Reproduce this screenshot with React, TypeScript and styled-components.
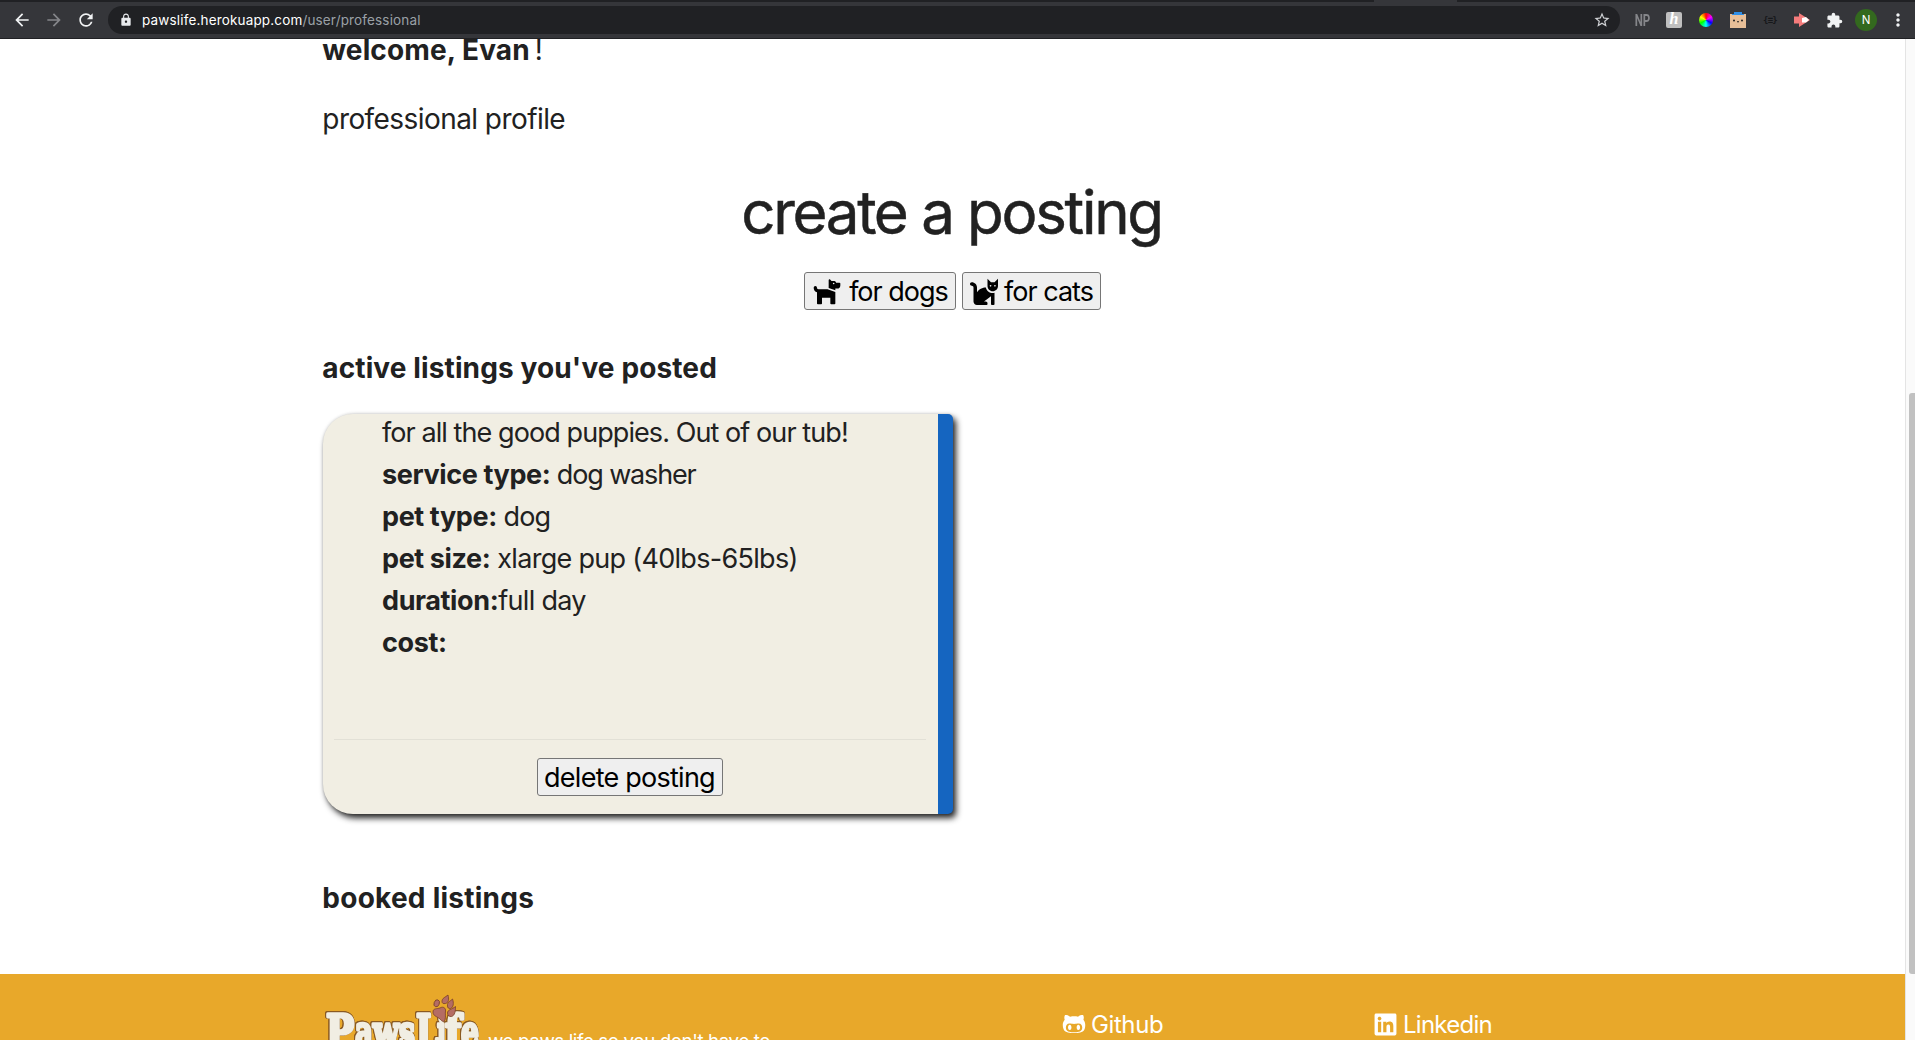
import React from "react";
import styled, { createGlobalStyle } from "styled-components";
import { FaDog, FaCat, FaGithubAlt, FaLinkedin } from "react-icons/fa";
import { MdArrowBack, MdArrowForward, MdRefresh, MdLock, MdStarBorder, MdExtension, MdMoreVert } from "react-icons/md";

const Global = createGlobalStyle`
  * { box-sizing: border-box; }
  html, body { margin: 0; padding: 0; overflow: hidden; background: #fff; }
  body { font-family: Inter, "Liberation Sans", sans-serif; color: #212121; }
`;

const Screen = styled.div`
  width: 1915px;
  height: 1040px;
  display: flex;
  flex-direction: column;
  overflow: hidden;
`;

const TabStrip = styled.div`
  height: 2px;
  flex: none;
  background: #202124;
  display: flex;
`;

const ActiveTab = styled.div`
  margin-left: 1374px;
  width: 83px;
  background: #35363a;
`;

const Toolbar = styled.header`
  height: 37px;
  flex: none;
  display: flex;
  align-items: center;
  background: #35363a;
  border-bottom: 1px solid #202124;
  padding-left: 12px;
`;

const NavIcon = styled.span<{ $dim?: boolean }>`
  width: 32px;
  display: flex;
  color: ${(p) => (p.$dim ? "#85868a" : "#f1f3f4")};
  svg { width: 20px; height: 20px; }
`;

const AddressBar = styled.div`
  width: 1512px;
  height: 28px;
  border-radius: 14px;
  background: #202124;
  display: flex;
  align-items: center;
  padding: 0 9px 0 11px;
  font-size: 13.5px;
`;

const Lock = styled(MdLock)`
  width: 14px;
  height: 14px;
  color: #e8eaed;
  margin-right: 9px;
`;

const Host = styled.span`
  color: #fff;
  letter-spacing: 0.16px;
`;

const Path = styled.span`
  color: #9aa0a6;
  flex: 1;
  letter-spacing: 0.15px;
`;

const Star = styled(MdStarBorder)`
  width: 18px;
  height: 18px;
  color: #d0d2d5;
`;

const Extensions = styled.div`
  display: flex;
  align-items: center;
  margin-left: 6px;
`;

const Slot = styled.span`
  width: 32px;
  height: 24px;
  display: flex;
  align-items: center;
  justify-content: center;
  color: #f1f3f4;
`;

const NpMark = styled.span`
  font: 700 17px Roboto, sans-serif;
  color: #85868a;
  transform: scaleX(0.68);
`;

const HoneyMark = styled.span`
  width: 16px;
  height: 16px;
  border-radius: 2px;
  background: #bfbfbf;
  color: #fff;
  font: italic 700 16px/14px "Liberation Serif", serif;
  text-align: center;
`;

const Wheel = styled.span`
  width: 14px;
  height: 14px;
  border-radius: 50%;
  background: conic-gradient(#f00, #f0f, #00f, #0ff, #0f0, #ff0, #f00);
`;

const Braces = styled.span`
  font: 700 9px "DejaVu Sans Mono", monospace;
  letter-spacing: -0.8px;
  color: #17181a;
`;

const Avatar = styled.span`
  width: 22px;
  height: 22px;
  border-radius: 50%;
  background: #33691e;
  color: #fff;
  font-size: 11.5px;
  line-height: 22px;
  text-align: center;
`;

const Viewport = styled.div`
  flex: 1;
  min-height: 0;
  display: flex;
`;

const Page = styled.div`
  width: 1905px;
  display: flex;
  flex-direction: column;
  overflow: hidden;
`;

const Main = styled.main`
  height: 935px;
  flex: none;
  padding: 0 323px;
  display: flex;
  flex-direction: column;
`;

const Line = styled.p<{ $h: number; $bold?: boolean; $ls: number }>`
  margin: 0 0 0 -0.7px;
  flex: none;
  height: ${(p) => p.$h}px;
  line-height: 42px;
  font-size: 28px;
  font-weight: ${(p) => (p.$bold ? 700 : 400)};
  letter-spacing: ${(p) => p.$ls}px;
  white-space: pre;
`;

const Welcome = styled(Line)`
  margin-top: -10px;
`;

const Plain = styled.span`
  font-weight: 400;
  margin-left: -3px;
`;

const Booked = styled(Line)`
  margin-top: 63px;
`;

const Title = styled.h2`
  margin: 0;
  height: 95px;
  line-height: 70px;
  flex: none;
  text-align: center;
  font-size: 60px;
  font-weight: 400;
  letter-spacing: -2.3px;
  padding-right: 2px;
  -webkit-text-stroke: 0.5px #212121;
`;

const ButtonRow = styled.div`
  display: flex;
  justify-content: center;
  gap: 6px;
  height: 75px;
  flex: none;
`;

const Button = styled.button<{ $w: number; $gap?: number; $ls: number }>`
  width: ${(p) => p.$w}px;
  height: 38px;
  padding: 2px 0 0;
  border: 1px solid #767676;
  border-radius: 3px;
  background: #efefef;
  color: #000;
  font-family: inherit;
  font-size: 27px;
  letter-spacing: ${(p) => p.$ls}px;
  line-height: 34px;
  white-space: pre;
  display: flex;
  justify-content: center;
  align-items: center;
  gap: ${(p) => p.$gap ?? 0}px;
  svg { margin-bottom: 3px; }
`;

const Card = styled.section`
  width: 630px;
  height: 400px;
  flex: none;
  background: #f1eee3;
  border-right: 15px solid #1565c0;
  border-radius: 30px 5px 5px 30px;
  box-shadow: 3px 4px 6px 0 #222, 0 0 3px rgba(0, 0, 0, 0.15);
  display: flex;
  flex-direction: column;
`;

const Details = styled.div`
  height: 326px;
  margin: 0 12px 0 11px;
  padding-left: 48px;
  border-bottom: 1px solid #e2e0d6;
  overflow: hidden;
`;

const Detail = styled.div`
  height: 42px;
  line-height: 38px;
  font-size: 27px;
  white-space: pre;
`;

const Label = styled.b`
  letter-spacing: -0.38px;
`;

const Value = styled.span<{ $ls: number }>`
  letter-spacing: ${(p) => p.$ls}px;
`;

const CardAction = styled.div`
  flex: 1;
  padding: 18px 2px 0 0;
  display: flex;
  justify-content: center;
`;

const Footer = styled.footer`
  height: 66px;
  flex: none;
  background: #e8a82a;
  color: #fff;
  padding-left: 324px;
  display: flex;
  overflow: hidden;
`;

const Logo = styled.svg`
  width: 160px;
  height: 90px;
  flex: none;
  margin-top: 18px;
  font-family: "DejaVu Serif", serif;
  font-weight: 700;
  font-size: 44px;
  stroke-linejoin: round;
`;

const LogoWord = styled.g`
  fill: #f1eee3;
  stroke: #f1eee3;
  stroke-width: 3.6px;
  filter: drop-shadow(0.8px 0 0 #8a5a22) drop-shadow(-0.8px 0 0 #8a5a22) drop-shadow(0 -0.8px 0 #8a5a22);
`;

const Tagline = styled.span`
  margin: 54px 0 0 4px;
  width: 574px;
  font-size: 18.8px;
  line-height: 28px;
  letter-spacing: -0.42px;
`;

const FooterLink = styled.a<{ $w: number; $ls: number }>`
  width: ${(p) => p.$w}px;
  height: 30px;
  margin-top: 35px;
  display: flex;
  align-items: center;
  gap: 5px;
  font-size: 24px;
  letter-spacing: ${(p) => p.$ls}px;
`;

const ScrollTrack = styled.div`
  width: 10px;
  background: #fafafa;
  border-left: 1px solid #e4e4e4;
  padding: 354px 0 0 3px;
`;

const ScrollThumb = styled.div`
  height: 581px;
  border-radius: 3px 0 0 3px;
  background: #c1c1c1;
`;

const details: { label: string; value: string; ls: number }[] = [
  { label: "", value: "for all the good puppies. Out of our tub!", ls: -0.92 },
  { label: "service type:", value: " dog washer", ls: -1.15 },
  { label: "pet type:", value: " dog", ls: -0.9 },
  { label: "pet size:", value: " xlarge pup (40lbs-65lbs)", ls: -0.7 },
  { label: "duration:", value: "full day", ls: -0.7 },
  { label: "cost:", value: "", ls: 0 },
];

const logoLetters: [string, number, number][] = [
  ["P", 2, 28],
  ["a", 31, 18],
  ["w", 49, 26],
  ["s", 75, 16],
  ["L", 92, 23],
  ["i", 113, 9],
  ["f", 121, 16],
  ["e", 137, 18],
];

export default function App() {
  return (
    <Screen>
      <Global />
      <TabStrip><ActiveTab /></TabStrip>
      <Toolbar>
        <NavIcon><MdArrowBack /></NavIcon>
        <NavIcon $dim><MdArrowForward /></NavIcon>
        <NavIcon><MdRefresh /></NavIcon>
        <AddressBar>
          <Lock />
          <Host>pawslife.herokuapp.com</Host>
          <Path>/user/professional</Path>
          <Star />
        </AddressBar>
        <Extensions>
          <Slot><NpMark>NP</NpMark></Slot>
          <Slot><HoneyMark>h</HoneyMark></Slot>
          <Slot><Wheel /></Slot>
          <Slot>
            <svg width="16" height="16" viewBox="0 0 16 16">
              <path d="M0 2h16v14H0z" fill="#e8bf98" />
              <path d="M4 0h8v2h2v1H2V2h2z" fill="#2f8fe8" />
              <circle cx="4" cy="8.500" r="1" fill="#222" />
              <circle cx="12" cy="8.500" r="1" fill="#222" />
              <path d="M7 9.500q1 1 2 0" stroke="#222" fill="none" />
            </svg>
          </Slot>
          <Slot><Braces>{"{≡}"}</Braces></Slot>
          <Slot>
            <svg width="16" height="14" viewBox="0 0 16 14">
              <path d="M0 3.500h5V0l11 7-11 7v-3.500H0z" fill="#f57b7b" />
              <path d="M8 5l4-1 3 3-3 2.500H8z" fill="#fff" />
            </svg>
          </Slot>
          <Slot><MdExtension size={17} /></Slot>
          <Slot><Avatar>N</Avatar></Slot>
          <Slot><MdMoreVert size={20} /></Slot>
        </Extensions>
      </Toolbar>
      <Viewport>
        <Page>
          <Main>
            <Welcome $h={69} $bold $ls={0.12}>welcome, Evan<Plain> !</Plain></Welcome>
            <Line $h={79} $ls={-0.57}>professional profile</Line>
            <Title>create a posting</Title>
            <ButtonRow>
              <Button $w={152} $gap={7} $ls={-1}><FaDog size={30} />for dogs</Button>
              <Button $w={139} $gap={6} $ls={-1}><FaCat size={28} />for cats</Button>
            </ButtonRow>
            <Line $h={67} $bold $ls={0.12}>active listings you've posted</Line>
            <Card>
              <Details>
                {details.map((d) => (
                  <Detail key={d.label}>
                    <Label>{d.label}</Label>
                    <Value $ls={d.ls}>{d.value}</Value>
                  </Detail>
                ))}
              </Details>
              <CardAction><Button $w={186} $ls={-0.75}>delete posting</Button></CardAction>
            </Card>
            <Booked $h={42} $bold $ls={0.25}>booked listings</Booked>
          </Main>
          <Footer>
            <Logo viewBox="0 0 160 90">
              <LogoWord>
                {logoLetters.map(([ch, x, w]) => (
                  <text key={ch} x={x} y="55" textLength={w} lengthAdjust="spacingAndGlyphs">{ch}</text>
                ))}
              </LogoWord>
              <g fill="#b46c64" stroke="#7a3f28" strokeWidth="0.8">
                <path d="M109 20C109 16 113 17 116 16C119 14 122 16 121.500 19C121 22 122 24 121 28C120 30.500 118 29.500 116 27C113 24.500 109 24 109 20Z" />
                <ellipse cx="112.700" cy="11.300" rx="2.600" ry="3.600" transform="rotate(20 112.700 11.300)" />
                <path d="M118 9.500C118 6 121 5.500 124 3C125 7 125 10.500 121.500 11.500C119 12 118 11 118 9.500Z" />
                <path d="M123.500 14C123 10 126 9.500 128.500 7C130 11 129.500 15.500 126.500 16.500C124.500 17 123.500 15.500 123.500 14Z" />
                <path d="M123.500 21C123.500 17.500 128 17.500 131.500 14.500C131.500 19 131 23.500 127.500 24.500C125 25 123.500 23 123.500 21Z" />
              </g>
            </Logo>
            <Tagline>we paws life so you don't have to</Tagline>
            <FooterLink $w={311} $ls={-0.4}><FaGithubAlt size={24} />Github</FooterLink>
            <FooterLink $w={200} $ls={-0.75}><FaLinkedin size={25} />Linkedin</FooterLink>
          </Footer>
        </Page>
        <ScrollTrack><ScrollThumb /></ScrollTrack>
      </Viewport>
    </Screen>
  );
}
